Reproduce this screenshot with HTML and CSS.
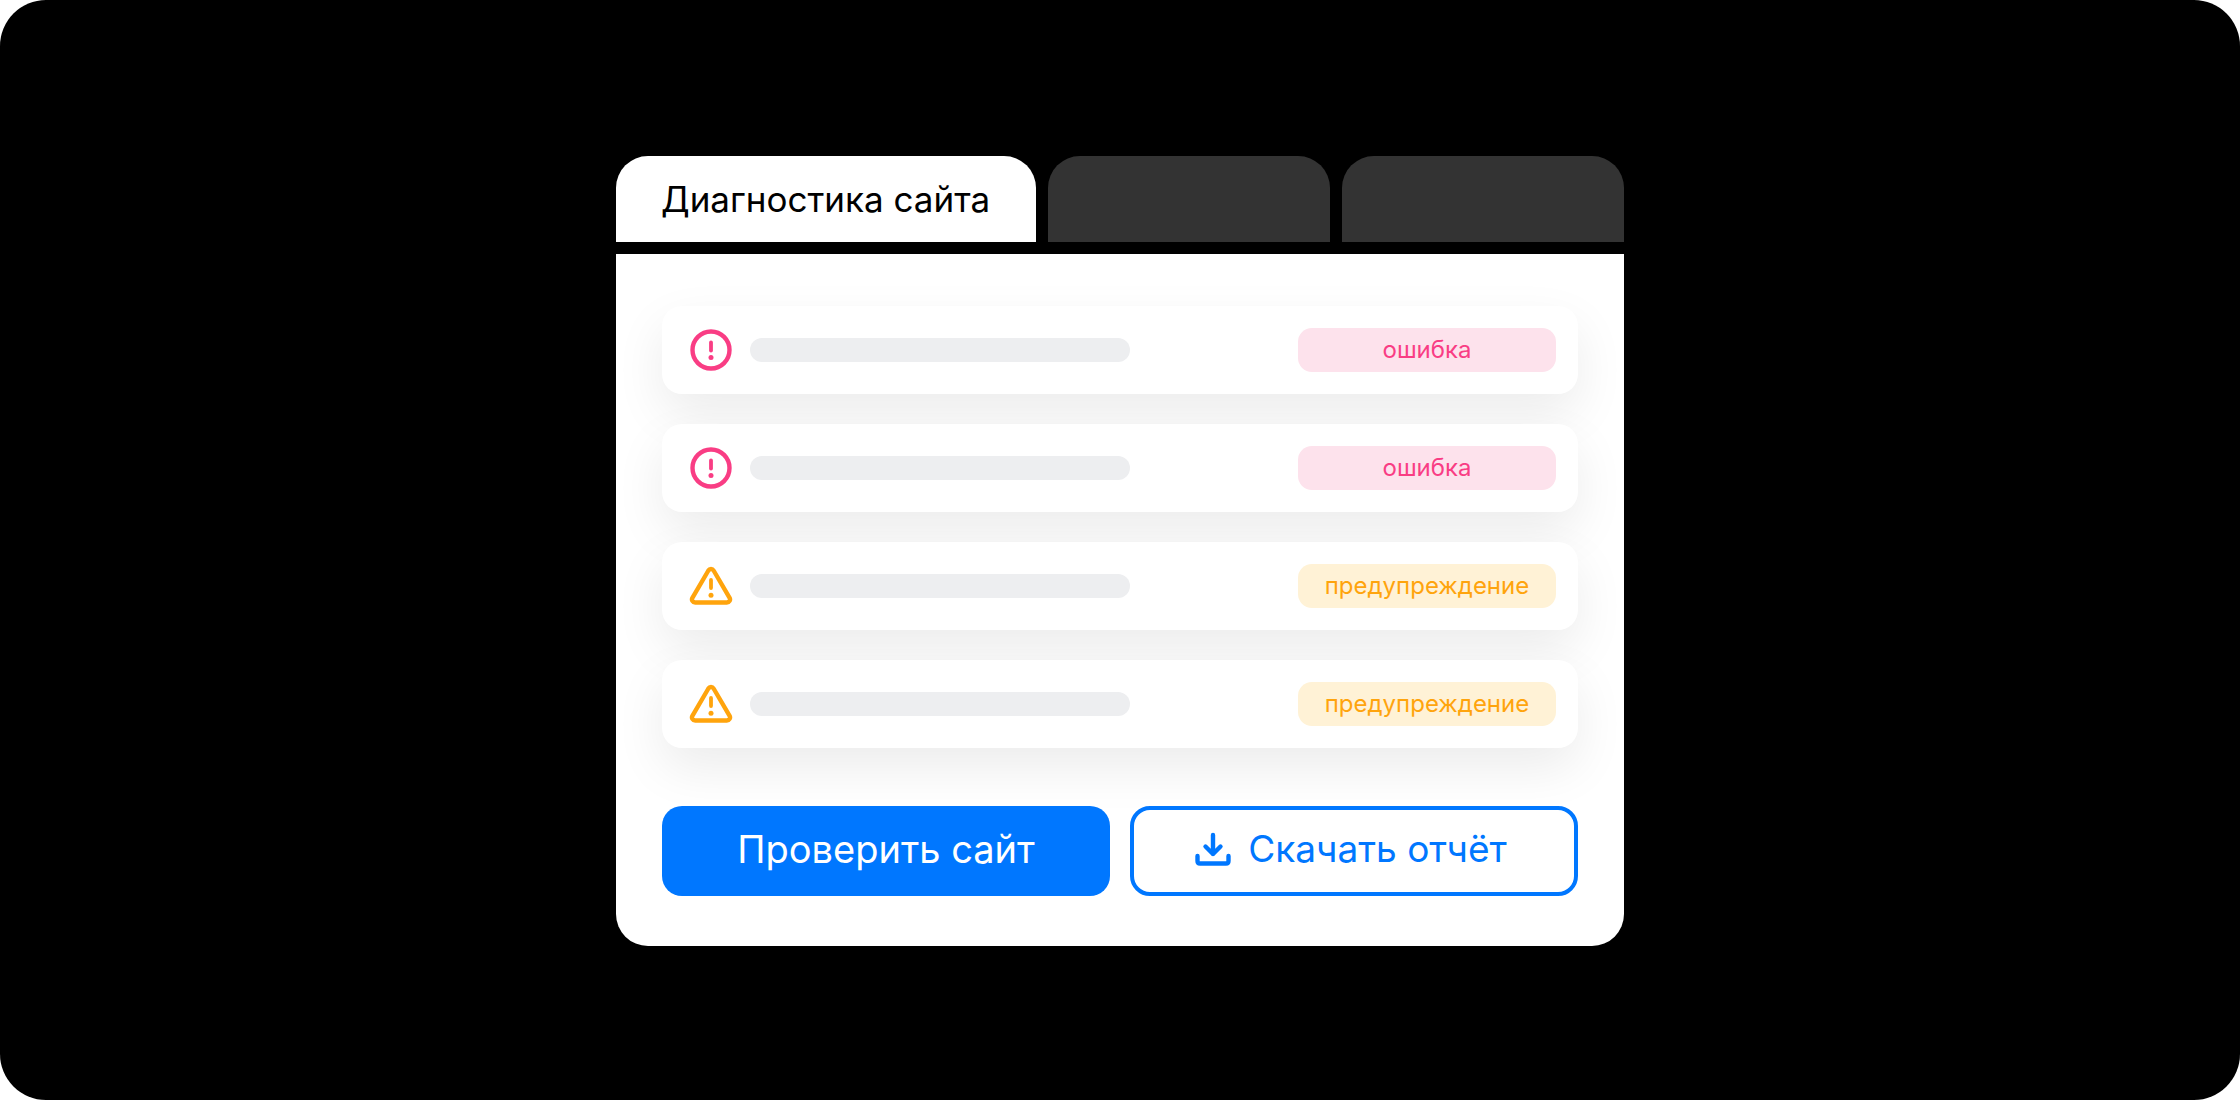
FILE: index.html
```html
<!DOCTYPE html>
<html lang="ru">
  <head>
    <meta charset="UTF-8" />
    <title>Диагностика сайта</title>
    <link rel="stylesheet" href="styles.css">
  </head>
  <body>
    <div class="frame">
      <div class="widget">
        <div class="tabs">
          <div class="tab tab-active">Диагностика сайта</div>
          <div class="tab tab-dark"></div>
          <div class="tab tab-dark"></div>
        </div>
        <div class="panel">
          <div class="rows">
            <div class="row">
              <svg class="row-icon" viewBox="0 0 44 44" fill="none">
                <circle cx="22" cy="22" r="18.5" stroke="#f93d84" stroke-width="4.4" />
                <path d="M22 14.5V22.5" stroke="#f93d84" stroke-width="3.8" stroke-linecap="round" />
                <circle cx="22" cy="29.5" r="2.5" fill="#f93d84" />
              </svg>
              <div class="bar"></div>
              <div class="badge badge-error">ошибка</div>
            </div>
            <div class="row">
              <svg class="row-icon" viewBox="0 0 44 44" fill="none">
                <circle cx="22" cy="22" r="18.5" stroke="#f93d84" stroke-width="4.4" />
                <path d="M22 14.5V22.5" stroke="#f93d84" stroke-width="3.8" stroke-linecap="round" />
                <circle cx="22" cy="29.5" r="2.5" fill="#f93d84" />
              </svg>
              <div class="bar"></div>
              <div class="badge badge-error">ошибка</div>
            </div>
            <div class="row">
              <svg class="row-icon" viewBox="0 0 44 44" fill="none">
                <path d="M19.4 6.5 3.4 33.8C2.2 36 3.6 38.5 6.2 38.5H37.8C40.4 38.5 41.8 36 40.6 33.8L24.6 6.5C23.4 4.5 20.6 4.5 19.4 6.5Z" stroke="#ffa40d" stroke-width="4.4" stroke-linejoin="round" />
                <path d="M22 16V24" stroke="#ffa40d" stroke-width="3.8" stroke-linecap="round" />
                <circle cx="22" cy="31.2" r="2.5" fill="#ffa40d" />
              </svg>
              <div class="bar"></div>
              <div class="badge badge-warn">предупреждение</div>
            </div>
            <div class="row">
              <svg class="row-icon" viewBox="0 0 44 44" fill="none">
                <path d="M19.4 6.5 3.4 33.8C2.2 36 3.6 38.5 6.2 38.5H37.8C40.4 38.5 41.8 36 40.6 33.8L24.6 6.5C23.4 4.5 20.6 4.5 19.4 6.5Z" stroke="#ffa40d" stroke-width="4.4" stroke-linejoin="round" />
                <path d="M22 16V24" stroke="#ffa40d" stroke-width="3.8" stroke-linecap="round" />
                <circle cx="22" cy="31.2" r="2.5" fill="#ffa40d" />
              </svg>
              <div class="bar"></div>
              <div class="badge badge-warn">предупреждение</div>
            </div>
          </div>
          <div class="buttons">
            <div class="btn btn-primary">Проверить сайт</div>
            <div class="btn btn-outline">
              <svg class="btn-icon" viewBox="0 0 36 36" fill="none">
                <path d="M18 3V22M10.5 14.5 18 22 25.5 14.5" stroke="#0077ff" stroke-width="4.4" stroke-linecap="round" stroke-linejoin="round" />
                <path d="M2.5 24V29C2.5 30.5 3.5 31.5 5 31.5H31C32.5 31.5 33.5 30.5 33.5 29V24" stroke="#0077ff" stroke-width="4.4" stroke-linecap="round" />
              </svg>
              Скачать отчёт
            </div>
          </div>
        </div>
      </div>
    </div>
  </body>
</html>
```

FILE: styles.css
```css
body {
  margin: 0;
  background: #fff;
  font-family: Inter, "Noto Sans", sans-serif;
}

.frame {
  height: 1100px;
  background: #000;
  border-radius: 46px;
  padding-top: 2px;
  box-sizing: border-box;
  display: flex;
  justify-content: center;
  align-items: center;
}

.widget {
  width: 1008px;
}

.tabs {
  display: flex;
  gap: 12px;
  margin-bottom: 12px;
}

.tab {
  height: 86px;
  width: 282px;
  border-radius: 32px 32px 0 0;
}

.tab-active {
  width: 420px;
  background: #fff;
  color: #000;
  font-size: 35px;
  line-height: 86px;
  padding-left: 45px;
  box-sizing: border-box;
}

.tab-dark {
  background: #333;
}

.panel {
  background: #fff;
  border-radius: 0 0 32px 32px;
  padding: 52px 46px 50px;
  overflow: hidden;
}

.rows {
  display: flex;
  flex-direction: column;
  gap: 30px;
}

.row {
  height: 88px;
  background: #fff;
  border-radius: 20px;
  box-shadow: 0 20px 50px rgba(0, 0, 0, 0.08);
  display: flex;
  align-items: center;
  padding: 0 22px 0 27px;
  box-sizing: border-box;
}

.row-icon {
  width: 44px;
  height: 44px;
  margin-right: 17px;
}

.bar {
  width: 380px;
  height: 24px;
  background: #edeef0;
  border-radius: 12px;
}

.badge {
  margin-left: auto;
  width: 258px;
  height: 44px;
  border-radius: 14px;
  font-size: 24px;
  line-height: 44px;
  text-align: center;
}

.badge-error {
  background: #fde2ec;
  color: #f93d84;
}

.badge-warn {
  background: #fff2d6;
  color: #ffa40d;
}

.buttons {
  display: grid;
  grid-template-columns: 1fr 1fr;
  gap: 20px;
  margin-top: 58px;
}

.btn {
  height: 90px;
  border-radius: 20px;
  display: flex;
  align-items: center;
  justify-content: center;
  box-sizing: border-box;
}

.btn-primary {
  background: #0077ff;
  color: #fff;
  font-size: 38px;
  padding-bottom: 5px;
}

.btn-outline {
  border: 4px solid #0077ff;
  color: #0077ff;
  font-size: 37px;
  gap: 17px;
  padding-bottom: 5px;
  padding-right: 6px;
}

.btn-icon {
  width: 36px;
  height: 36px;
  margin-top: 3px;
}
```
